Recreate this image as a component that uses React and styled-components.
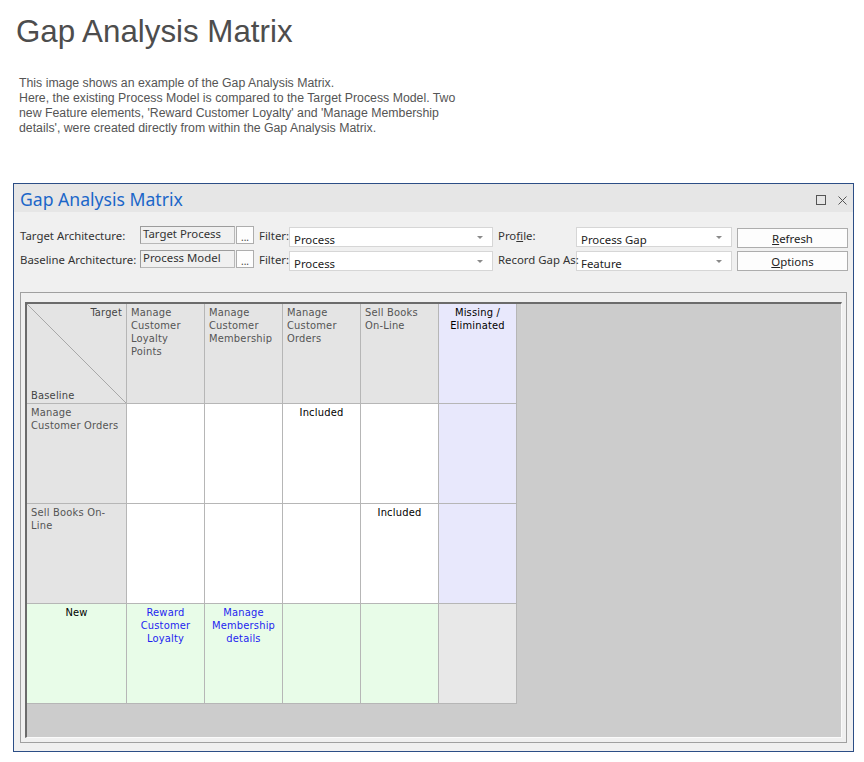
import React from 'react';
import styled, { createGlobalStyle } from 'styled-components';

const Global = createGlobalStyle`
  html, body { margin: 0; padding: 0; background: #ffffff; }
  body { width: 864px; }
`;

const Page = styled.div`
  padding-top: 14px;
`;

const Heading = styled.h1`
  margin: 0 0 0 16px;
  font: 400 31.3px/36px "Liberation Sans", Arial, sans-serif;
  color: #4d4d4d;
`;

const Intro = styled.p`
  margin: 26px 0 0 19px;
  font: 12.3px/15px "Liberation Sans", Arial, sans-serif;
  color: #555555;
`;

const Window = styled.section`
  margin: 47px 0 0 13px;
  width: 841px;
  box-sizing: border-box;
  border: 1px solid #2c4e86;
  background: #f0f0f0;
`;

const TitleBar = styled.header`
  height: 28px;
  display: flex;
  align-items: center;
  padding: 0 6px;
  background: #e6e6e6;
`;

const WindowTitle = styled.h2`
  margin: 0;
  font: 400 17.6px/24px "Noto Sans", "Open Sans", sans-serif;
  color: #1b66c9;
  padding-top: 2px;
`;

const TitleIcons = styled.div`
  margin-left: auto;
  display: flex;
  gap: 12px;
  align-items: center;
  padding-top: 4px;
`;

const Body = styled.div`
  padding: 14px 6px 8px;
`;

const Form = styled.div`
  display: grid;
  grid-template-columns: 120px 95px 19px 35px 204px 83px 156px 116px;
  grid-template-rows: 21px 21px;
  row-gap: 3px;
  align-items: start;
  font: 11.4px "Noto Sans", "Open Sans", sans-serif;
  color: #333333;
`;

const Label = styled.span`
  white-space: nowrap;
  line-height: 16px;
  padding-top: 2px;
  padding-left: ${(p) => p.$indent || 0}px;
  position: relative;
  z-index: 1;
`;

const TextBox = styled.div`
  height: 18px;
  box-sizing: border-box;
  border: 1px solid #b8b8b8;
  border-top-color: #9c9c9c;
  border-left-color: #9c9c9c;
  background: #f0f0f0;
  padding: 0 2px;
  line-height: 14px;
  white-space: nowrap;
  overflow: hidden;
  color: #333;
`;

const EllipsisButton = styled.div`
  margin-left: 1px;
  width: 18px;
  height: 18px;
  box-sizing: border-box;
  border: 1px solid #adadad;
  background: #fdfdfd;
  font-size: 10px;
  line-height: 20px;
  text-align: center;
  color: #444;
`;

const Combo = styled.div`
  margin-top: 1px;
  height: 20px;
  box-sizing: border-box;
  border: 1px solid #d6d6d6;
  background: #ffffff;
  display: flex;
  align-items: center;
  padding: 4px 9px 0 4px;
  color: #222;
  &::after {
    content: "";
    margin-left: auto;
    border-left: 3px solid transparent;
    border-right: 3px solid transparent;
    border-top: 3px solid #8a8a8a;
    margin-top: -4px;
  }
`;

const Button = styled.div`
  margin: ${(p) => (p.$second ? '1px' : '2px')} 0 0 5px;
  width: 111px;
  height: 20px;
  box-sizing: border-box;
  border: 1px solid #adadad;
  background: #fdfdfd;
  text-align: center;
  line-height: 19px;
  color: #222;
  u { text-decoration: underline; text-underline-offset: 1px; }
`;

const Panel = styled.div`
  margin-top: 21px;
  height: 451px;
  box-sizing: border-box;
  border: 1px solid #a0a0a0;
  padding: 9px 4px 4px;
`;

const Sunken = styled.div`
  height: 436px;
  box-sizing: border-box;
  border-top: 2px solid #6b6b6b;
  border-left: 2px solid #6b6b6b;
  border-right: 1px solid #fafafa;
  border-bottom: 1px solid #fafafa;
  background: #cccccc;
`;

const Matrix = styled.div`
  display: grid;
  grid-template-columns: 100px repeat(5, 78px);
  grid-auto-rows: 100px;
  width: max-content;
  font-family: "DejaVu Sans Condensed", "DejaVu Sans", sans-serif;
  font-stretch: condensed;
  font-size: 11px;
  line-height: 13px;
  letter-spacing: 0.2px;
`;

const bgFor = {
  head: '#e4e4e4',
  blank: '#ffffff',
  missing: '#e8e8fc',
  fresh: '#e8fce8',
  none: '#e8e8e8',
};

const Cell = styled.div`
  box-sizing: border-box;
  border-right: 1px solid #b6b6b6;
  border-bottom: 1px solid #b6b6b6;
  background: ${(p) => bgFor[p.$kind]};
  padding: 2px 4px;
  text-align: ${(p) => (p.$center ? 'center' : 'left')};
  color: ${(p) => p.$color || '#555555'};
`;

const Corner = styled(Cell)`
  display: flex;
  flex-direction: column;
  justify-content: space-between;
  padding: 2px 4px 1px;
  background:
    linear-gradient(to top right, transparent calc(50% - 0.6px), #a8a8a8 50%, transparent calc(50% + 0.6px)),
    #e4e4e4;
  color: #444;
`;

const CornerTarget = styled.span`
  align-self: flex-end;
`;

const CornerBaseline = styled.span`
  align-self: flex-start;
`;

const BLUE = '#1f1ff0';

function MaxIcon() {
  return (
    <svg width="10" height="10" viewBox="0 0 10 10">
      <rect x="0.5" y="0.5" width="9" height="9" fill="none" stroke="#555" strokeWidth="1" />
    </svg>
  );
}

function CloseIcon() {
  return (
    <svg width="9" height="9" viewBox="0 0 9 9">
      <path d="M0.5 0.5 L8.5 8.5 M8.5 0.5 L0.5 8.5" stroke="#555" strokeWidth="1" />
    </svg>
  );
}

export default function App() {
  return (
    <Page>
      <Global />
      <Heading>Gap Analysis Matrix</Heading>
      <Intro>
        This image shows an example of the Gap Analysis Matrix.
        <br />
        Here, the existing Process Model is compared to the Target Process Model. Two
        <br />
        new Feature elements, 'Reward Customer Loyalty' and 'Manage Membership
        <br />
        details', were created directly from within the Gap Analysis Matrix.
      </Intro>

      <Window>
        <TitleBar>
          <WindowTitle>Gap Analysis Matrix</WindowTitle>
          <TitleIcons>
            <MaxIcon />
            <CloseIcon />
          </TitleIcons>
        </TitleBar>
        <Body>
          <Form>
            <Label>Target Architecture:</Label>
            <TextBox>Target Process</TextBox>
            <EllipsisButton>...</EllipsisButton>
            <Label $indent={5}>Filter:</Label>
            <Combo>Process</Combo>
            <Label $indent={5}>
              Pro<u>f</u>ile:
            </Label>
            <Combo>Process Gap</Combo>
            <Button>
              <u>R</u>efresh
            </Button>

            <Label>Baseline Architecture:</Label>
            <TextBox>Process Model</TextBox>
            <EllipsisButton>...</EllipsisButton>
            <Label $indent={5}>Filter:</Label>
            <Combo>Process</Combo>
            <Label $indent={5}>Record Gap As:</Label>
            <Combo>Feature</Combo>
            <Button $second>
              <u>O</u>ptions
            </Button>
          </Form>

          <Panel>
            <Sunken>
              <Matrix>
                <Corner $kind="head">
                  <CornerTarget>Target</CornerTarget>
                  <CornerBaseline>Baseline</CornerBaseline>
                </Corner>
                <Cell $kind="head">Manage Customer Loyalty Points</Cell>
                <Cell $kind="head">Manage Customer Membership</Cell>
                <Cell $kind="head">Manage Customer Orders</Cell>
                <Cell $kind="head">Sell Books On-Line</Cell>
                <Cell $kind="missing" $center $color="#000">
                  Missing / Eliminated
                </Cell>

                <Cell $kind="head">Manage Customer Orders</Cell>
                <Cell $kind="blank" />
                <Cell $kind="blank" />
                <Cell $kind="blank" $center $color="#000">
                  Included
                </Cell>
                <Cell $kind="blank" />
                <Cell $kind="missing" />

                <Cell $kind="head">Sell Books On-Line</Cell>
                <Cell $kind="blank" />
                <Cell $kind="blank" />
                <Cell $kind="blank" />
                <Cell $kind="blank" $center $color="#000">
                  Included
                </Cell>
                <Cell $kind="missing" />

                <Cell $kind="fresh" $center $color="#000">
                  New
                </Cell>
                <Cell $kind="fresh" $center $color={BLUE}>
                  Reward Customer Loyalty
                </Cell>
                <Cell $kind="fresh" $center $color={BLUE}>
                  Manage Membership details
                </Cell>
                <Cell $kind="fresh" />
                <Cell $kind="fresh" />
                <Cell $kind="none" />
              </Matrix>
            </Sunken>
          </Panel>
        </Body>
      </Window>
    </Page>
  );
}
